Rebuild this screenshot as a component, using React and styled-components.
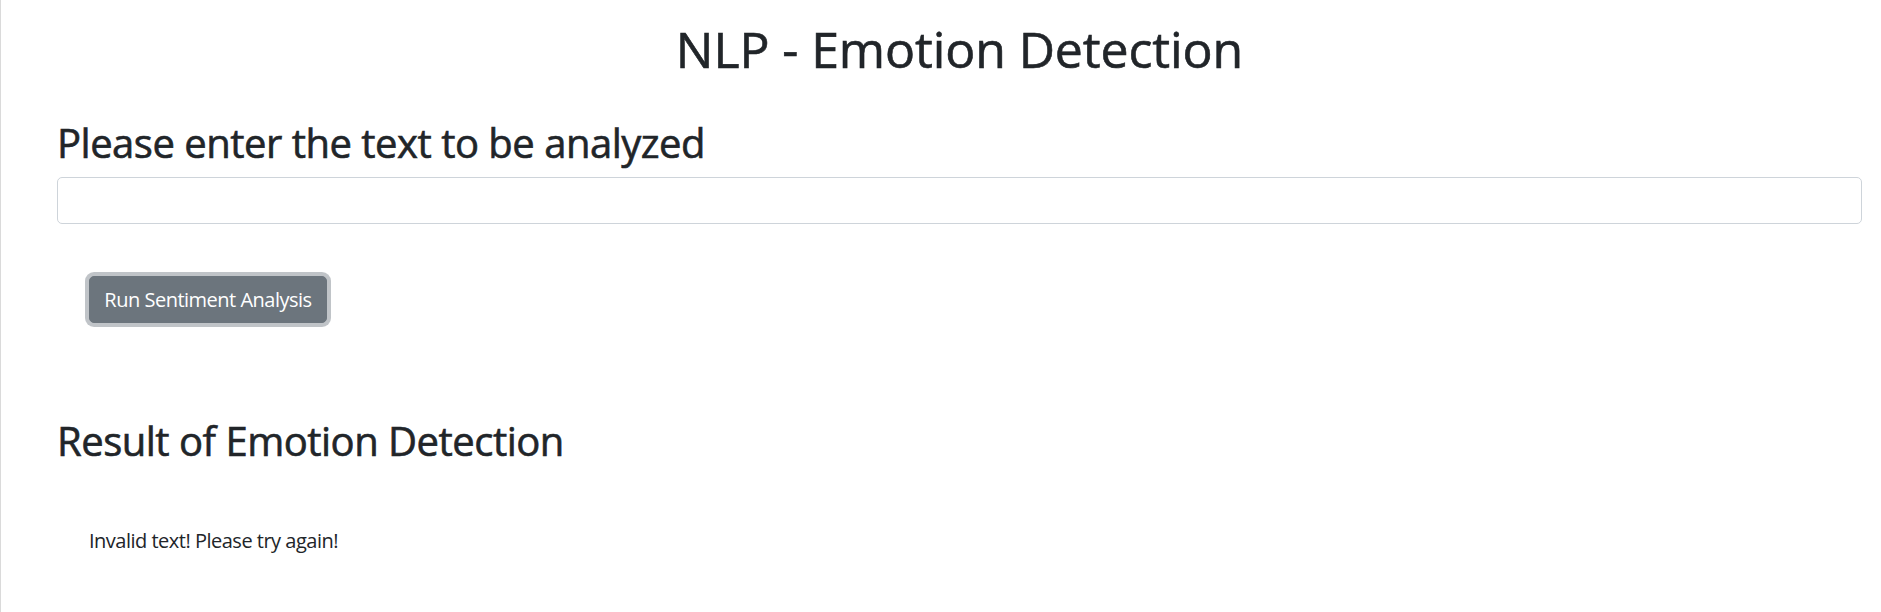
import React from 'react';
import styled, { createGlobalStyle } from 'styled-components';

const GlobalStyle = createGlobalStyle`
  html, body {
    margin: 0;
    padding: 0;
    background: #fff;
  }
  body {
    font-family: "Open Sans", "Noto Sans", sans-serif;
    color: #212529;
  }
`;

const Page = styled.div`
  box-sizing: border-box;
  min-height: 100vh;
  border-left: 1px solid #dadada;
  padding: 19px 19px 0 56px;
`;

const Title = styled.h1`
  margin: 0 0 40px;
  font-size: 50px;
  font-weight: 500;
  line-height: 60px;
  letter-spacing: -0.1px;
  text-align: center;
  -webkit-text-stroke: 0.6px #212529;
`;

const Heading = styled.h2`
  margin: 0 0 ${({ gap }) => gap}px;
  font-size: 40px;
  font-weight: 500;
  line-height: 48px;
  letter-spacing: -0.5px;
  -webkit-text-stroke: 0.6px #212529;
`;

const TextInput = styled.input`
  display: block;
  box-sizing: border-box;
  width: 100%;
  height: 47px;
  margin: 0;
  padding: 7px 15px;
  font: inherit;
  font-size: 20px;
  color: #495057;
  background: #fff;
  border: 1px solid #ced4da;
  border-radius: 5px;
  outline: none;
`;

const Actions = styled.div`
  display: flex;
  padding: 52px 0 0 32px;
  margin-bottom: 94px;
`;

const Button = styled.button`
  box-sizing: border-box;
  width: 238px;
  height: 47px;
  padding: 0 10px;
  font-family: inherit;
  font-size: 20px;
  line-height: 1.5;
  letter-spacing: -0.5px;
  white-space: nowrap;
  color: #fff;
  background: #6c757d;
  border: 1px solid #6c757d;
  border-radius: 5px;
  box-shadow: 0 0 0 4px rgba(130, 138, 145, 0.5);
  cursor: pointer;
`;

const Result = styled.p`
  margin: 61px 0 0 32px;
  font-size: 20px;
  line-height: 30px;
  letter-spacing: -0.5px;
`;

export default function App() {
  return (
    <>
      <GlobalStyle />
      <Page>
        <Title>NLP - Emotion Detection</Title>
        <Heading gap={10}>Please enter the text to be analyzed</Heading>
        <TextInput type="text" />
        <Actions>
          <Button type="button">Run Sentiment Analysis</Button>
        </Actions>
        <Heading gap={0}>Result of Emotion Detection</Heading>
        <Result>Invalid text! Please try again!</Result>
      </Page>
    </>
  );
}
